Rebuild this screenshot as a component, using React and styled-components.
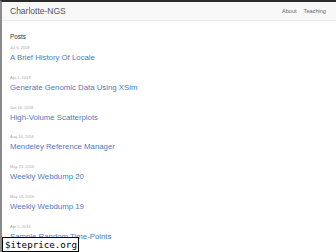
import React from 'react'
import styled, { createGlobalStyle } from 'styled-components';

const posts = [
  { date: 'Jul 6, 2018', title: 'A Brief History Of Locale' },
  { date: 'Apr 1, 2018', title: 'Generate Genomic Data Using XSim' },
  { date: 'Jan 16, 2018', title: 'High-Volume Scatterplots' },
  { date: 'Aug 16, 2016', title: 'Mendeley Reference Manager' },
  { date: 'May 24, 2016', title: 'Weekly Webdump 20' },
  { date: 'May 16, 2016', title: 'Weekly Webdump 19' },
  { date: 'Apr 5, 2016', title: 'Sample Random Time-Points' },
];

const GlobalStyle = createGlobalStyle`
  html, body {
    margin: 0;
    padding: 0;
    background: #fff;
    font-family: "Liberation Sans", Arial, sans-serif;
    color: #333;
  }
`;

const Page = styled.div`
  position: relative;
  width: 336px;
  height: 252px;
  overflow: hidden;
  border-top: 2px solid #2b2b2b;
  border-left: 2px solid #8a8a8a;
  box-sizing: border-box;
`;

const Navbar = styled.div`
  height: 18px;
  display: flex;
  align-items: center;
  justify-content: space-between;
  padding: 0 10px 0 8px;
  background: #f8f8f8;
  border-bottom: 1px solid #ececec;
`;

const Brand = styled.div`
  font-size: 8.5px;
  color: #555;
`;

const NavLinks = styled.div`
  display: flex;
  gap: 7px;
  font-size: 5.6px;
  color: #666;
`;

const Content = styled.div`
  padding: 12px 8px 0;
`;

const Heading = styled.div`
  font-size: 6.4px;
  color: #333;
  margin-bottom: 5px;
`;

const List = styled.div`
  display: flex;
  flex-direction: column;
  gap: 11.8px;
`;

const Post = styled.div`
  display: flex;
  flex-direction: column;
  gap: 2px;
`;

const PostDate = styled.div`
  font-size: 4px;
  line-height: 6px;
  color: #aaa;
`;

const PostTitle = styled.div`
  font-size: 7.8px;
  line-height: 10px;
  color: #4d7cbe;
`;

const Badge = styled.div`
  position: absolute;
  left: 0;
  bottom: 0;
  background: #fff;
  border: 1px solid #000;
  padding: 0 1px 0 2px;
  font-family: "DejaVu Sans Mono", monospace;
  font-size: 9.2px;
  line-height: 13px;
  color: #000;
`;

export default function App() {
  return (
    <>
      <GlobalStyle />
      <Page>
        <Navbar>
          <Brand>Charlotte-NGS</Brand>
          <NavLinks>
            <span>About</span>
            <span>Teaching</span>
          </NavLinks>
        </Navbar>
        <Content>
          <Heading>Posts</Heading>
          <List>
            {posts.map((p) => (
              <Post key={p.title}>
                <PostDate>{p.date}</PostDate>
                <PostTitle>{p.title}</PostTitle>
              </Post>
            ))}
          </List>
        </Content>
        <Badge>$iteprice.org</Badge>
      </Page>
    </>
  )
}
